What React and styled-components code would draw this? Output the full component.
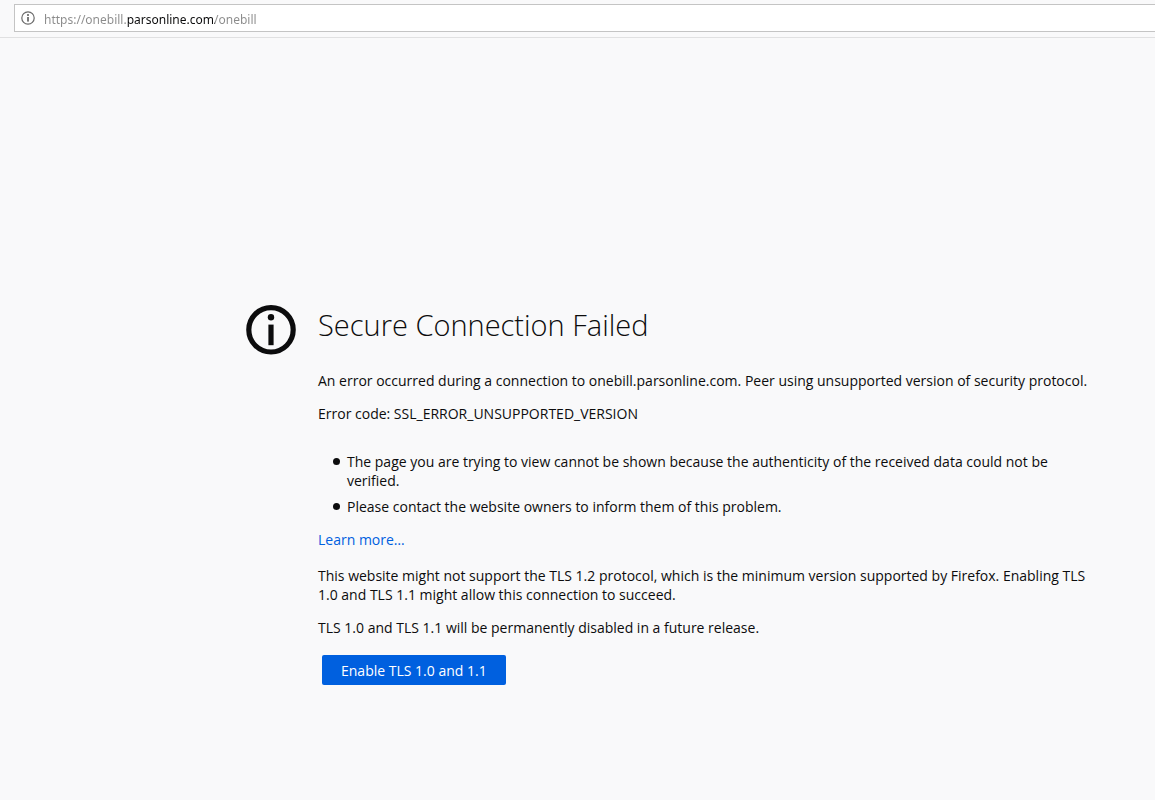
import React, { useState } from 'react';
import styled, { createGlobalStyle } from 'styled-components';

const GlobalStyle = createGlobalStyle`
    * {
        box-sizing: border-box;
    }
    body {
        margin: 0;
        background: #f9f9fa;
        color: #0c0c0d;
        font-family: "Open Sans", "Noto Sans", sans-serif;
        font-size: 14px;
        line-height: 19px;
    }
`;

const Toolbar = styled.header`
    height: 38px;
    padding: 4px 0 5px 14px;
    background: #f9f9fa;
    border-bottom: 1px solid #e0e0e1;
`;

const AddressBar = styled.label`
    display: flex;
    align-items: center;
    gap: 9px;
    height: 28px;
    padding-left: 6px;
    background: #fff;
    border: 1px solid #c4c4c4;
    border-right: 0;
`;

/* the domain is darker than the rest of the address */
const Address = styled.input`
    flex: 1;
    min-width: 0;
    height: 26px;
    padding: 2px 0 0;
    border: 0;
    outline: 0;
    font-family: "Noto Sans", "Open Sans", sans-serif;
    font-size: 12px;
    color: transparent;
    caret-color: #0c0c0d;
    background: linear-gradient(to right, #8b8b8b 83px, #0c0c0d 83px, #0c0c0d 171px, #8b8b8b 171px);
    background-clip: text;
    -webkit-background-clip: text;
`;

const Page = styled.main`
    display: flex;
    align-items: flex-start;
    gap: 22px;
    max-width: 1090px;
    padding: 267px 0 40px 246px;
`;

const BadgeIcon = styled.svg`
    flex: none;
    width: 50px;
    height: 50px;
`;

const SmallIcon = styled.svg`
    flex: none;
    width: 14px;
    height: 14px;
`;

const Content = styled.div`
    flex: 1;
    min-width: 0;
`;

const Title = styled.h1`
    margin: 0 0 26px;
    font-size: 29px;
    font-weight: 300;
    line-height: 40px;
`;

const Text = styled.p`
    margin: 0 0 14px;
`;

const Reasons = styled.ul`
    margin: 29px 0 14px;
    padding-left: 15px;
    list-style: none;
`;

const Reason = styled.li`
    display: flex;
    gap: 7px;
    margin-bottom: 7px;

    &::before {
        content: "";
        flex: none;
        width: 7px;
        height: 7px;
        margin-top: 6px;
        border-radius: 50%;
        background: #0c0c0d;
    }
`;

const LearnMore = styled.a`
    display: inline-block;
    margin-bottom: 17px;
    color: #0060df;
    text-decoration: none;
`;

const EnableButton = styled.button`
    height: 30px;
    margin: 4px;
    padding: 0 19px;
    border: 0;
    border-radius: 2px;
    background: #0060df;
    color: #fff;
    font: inherit;
`;

const App = () => {
    const [url, setUrl] = useState('https://onebill.parsonline.com/onebill');

    return (
        <>
            <GlobalStyle />
            <Toolbar>
                <AddressBar>
                    <SmallIcon viewBox="0 0 14 14" aria-hidden="true">
                        <circle cx="7" cy="7" r="6.2" fill="none" stroke="#6b6b6b" strokeWidth="1.2" />
                        <circle cx="7" cy="4" r="1" fill="#5a5a5a" />
                        <rect x="6.2" y="6" width="1.6" height="4.6" fill="#5a5a5a" />
                    </SmallIcon>
                    <Address aria-label="Address" value={url} onChange={(e) => setUrl(e.target.value)} />
                </AddressBar>
            </Toolbar>
            <Page>
                <BadgeIcon viewBox="0 0 50 50" aria-hidden="true">
                    <circle cx="25" cy="24.8" r="22.2" fill="none" stroke="#0c0c0d" strokeWidth="5.2" />
                    <circle cx="25" cy="12.2" r="3.2" fill="#0c0c0d" />
                    <rect x="22.4" y="19.6" width="5.2" height="20.6" fill="#0c0c0d" />
                </BadgeIcon>
                <Content>
                    <Title>Secure Connection Failed</Title>
                    <Text>
                        An error occurred during a connection to onebill.parsonline.com. Peer using unsupported version of security protocol.
                    </Text>
                    <Text>Error code: SSL_ERROR_UNSUPPORTED_VERSION</Text>
                    <Reasons>
                        <Reason>
                            The page you are trying to view cannot be shown because the authenticity of the received data could not be verified.
                        </Reason>
                        <Reason>Please contact the website owners to inform them of this problem.</Reason>
                    </Reasons>
                    <LearnMore href="#learn-more">Learn more…</LearnMore>
                    <Text>
                        This website might not support the TLS 1.2 protocol, which is the minimum version supported by Firefox. Enabling TLS 1.0 and TLS 1.1 might allow this connection to succeed.
                    </Text>
                    <Text>TLS 1.0 and TLS 1.1 will be permanently disabled in a future release.</Text>
                    <EnableButton type="button">Enable TLS 1.0 and 1.1</EnableButton>
                </Content>
            </Page>
        </>
    );
};

export default App;
